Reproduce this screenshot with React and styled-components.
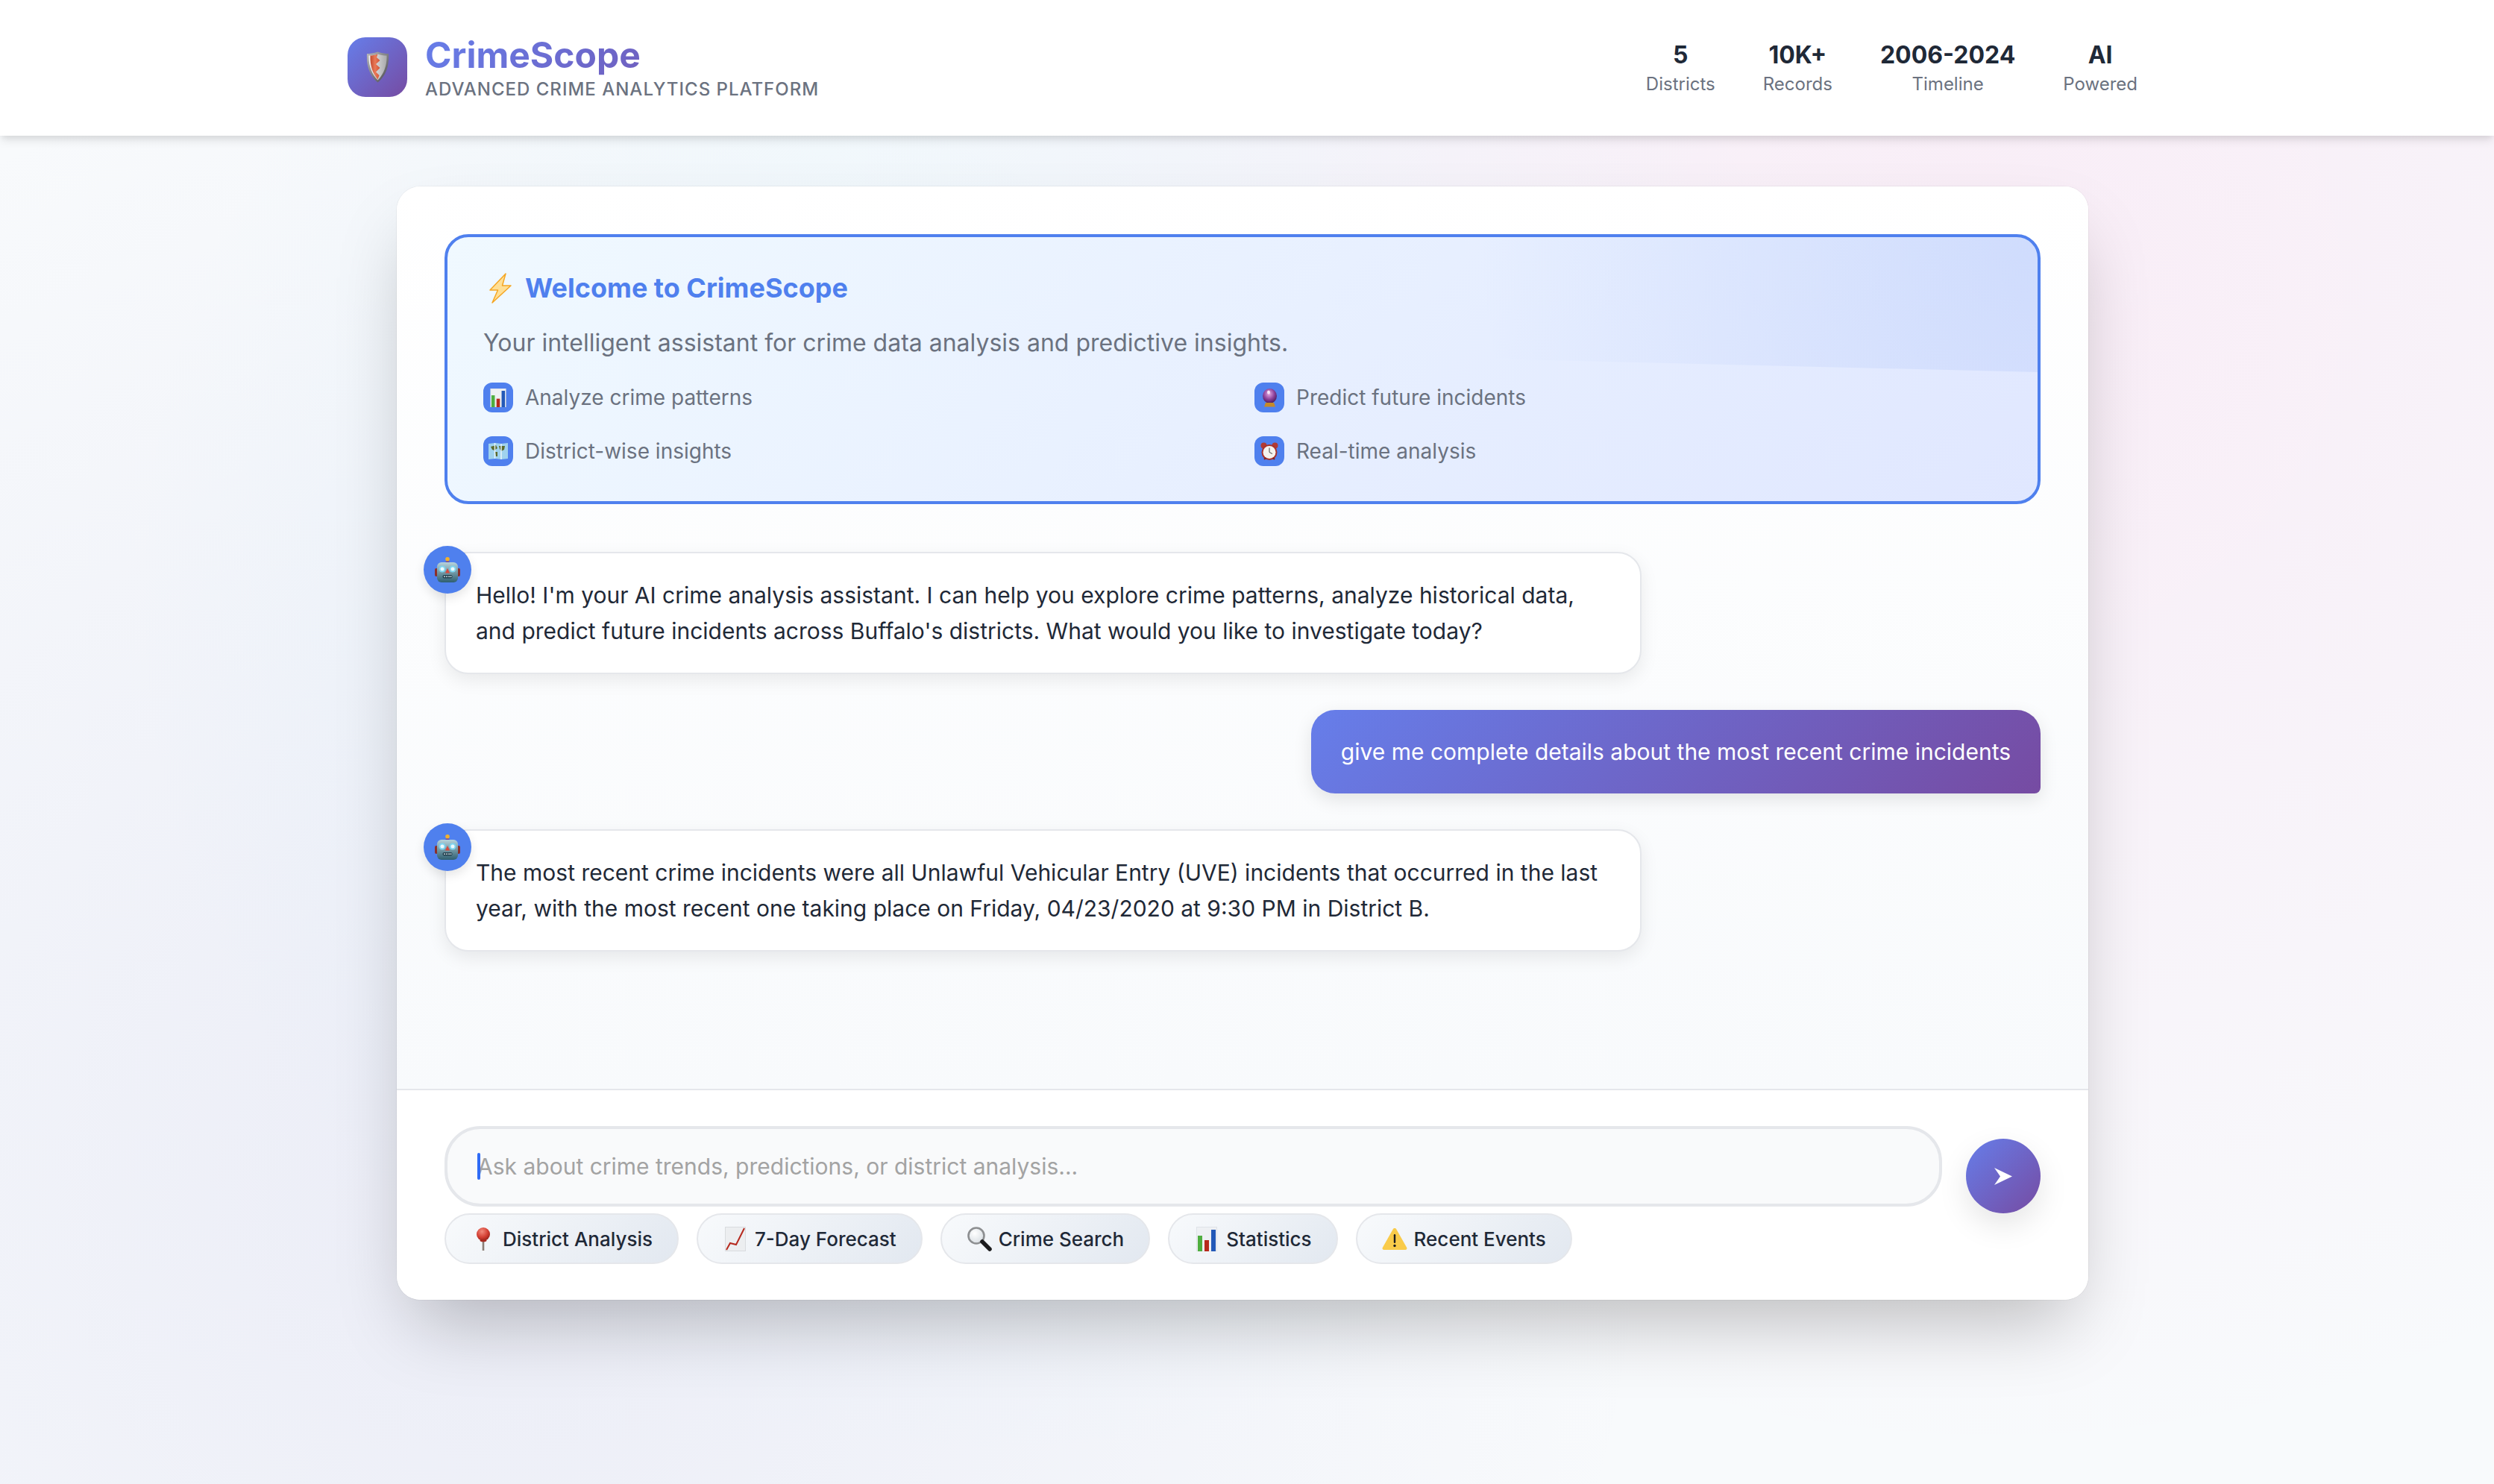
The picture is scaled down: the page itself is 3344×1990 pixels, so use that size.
import React from "react";
import styled, { createGlobalStyle } from "styled-components";

const Global = createGlobalStyle`
  * { box-sizing: border-box; }
  html, body { margin: 0; padding: 0; }
  body {
    font-family: "Inter", "Liberation Sans", sans-serif;
    color: #1f2937;
    background: #f8fafc;
  }
`;

const Page = styled.div`
  min-height: 1990px;
  display: flex;
  flex-direction: column;
  background:
    radial-gradient(circle at 20% 80%, rgba(120, 119, 198, 0.1) 0%, transparent 50%),
    radial-gradient(circle at 80% 20%, rgba(255, 119, 198, 0.1) 0%, transparent 50%),
    radial-gradient(circle at 40% 40%, rgba(120, 219, 255, 0.1) 0%, transparent 50%),
    #f8fafc;
`;

const Header = styled.header`
  height: 182px;
  padding: 0 478px 0 466px;
  display: flex;
  align-items: center;
  justify-content: space-between;
  background: #fff;
  box-shadow: 0 8px 12px -2px rgba(0, 0, 0, 0.1), 0 4px 8px -2px rgba(0, 0, 0, 0.06);
`;

const Brand = styled.div`
  display: flex;
  align-items: center;
  gap: 24px;
  margin-top: -2px;
`;

const LogoTile = styled.div`
  width: 80px;
  height: 80px;
  border-radius: 24px;
  display: flex;
  align-items: center;
  justify-content: center;
  background: linear-gradient(135deg, #667eea 0%, #764ba2 100%);
`;

const BrandText = styled.div`
  display: flex;
  flex-direction: column;
`;

const BrandName = styled.h1`
  margin: 0 0 4px;
  font-size: 48px;
  line-height: 56px;
  font-weight: 700;
  background: linear-gradient(135deg, #667eea 0%, #764ba2 100%);
  -webkit-background-clip: text;
  background-clip: text;
  color: transparent;
`;

const BrandTag = styled.p`
  margin: 0;
  font-size: 24px;
  line-height: 28px;
  font-weight: 500;
  letter-spacing: 1px;
  color: #6b7280;
`;

const Stats = styled.div`
  display: flex;
  gap: 64px;
  margin-top: -2px;
`;

const Stat = styled.div`
  display: flex;
  flex-direction: column;
  align-items: center;
`;

const StatValue = styled.div`
  margin-bottom: 2px;
  font-size: 32px;
  line-height: 44px;
  font-weight: 700;
  color: #1f2937;
`;

const StatLabel = styled.div`
  font-size: 24px;
  line-height: 30px;
  color: #6b7280;
`;

const Main = styled.main`
  padding: 68px 544px 0 532px;
`;

const Card = styled.section`
  background: #fff;
  border-radius: 32px;
  box-shadow: 0 0 0 1px rgba(0, 0, 0, 0.04), 0 50px 100px -24px rgba(0, 0, 0, 0.25);
`;

const Messages = styled.div`
  height: 1210px;
  padding: 64px;
  display: flex;
  flex-direction: column;
  gap: 48px;
  border-radius: 32px 32px 0 0;
  background: linear-gradient(180deg, #ffffff 0%, #f8fafc 100%);
`;

const Welcome = styled.div`
  position: relative;
  overflow: hidden;
  height: 362px;
  margin-bottom: 16px;
  padding: 44px 48px;
  border: 4px solid #4f80ee;
  border-radius: 32px;
  background: linear-gradient(135deg, #f0f9ff 0%, #e0e7ff 100%);
  &::before {
    content: "";
    position: absolute;
    top: calc(-50% + 4px);
    right: -50%;
    width: 100%;
    height: 100%;
    transform: rotate(1.4deg);
    background: radial-gradient(circle, rgba(79, 128, 238, 0.13) 0%, transparent 70%);
  }
`;

const WelcomeTitle = styled.h2`
  position: relative;
  margin: 0 0 26px;
  display: flex;
  align-items: center;
  gap: 18px;
  font-size: 36px;
  line-height: 48px;
  font-weight: 700;
  color: #4f80ee;
  & > svg { margin-left: 8px; }
`;

const WelcomeLead = styled.p`
  position: relative;
  margin: 0 0 29px;
  font-size: 32px;
  line-height: 48px;
  color: #6b7280;
`;

const Features = styled.div`
  position: relative;
  display: grid;
  grid-template-columns: 1fr 1fr;
  gap: 32px;
`;

const Feature = styled.div`
  display: flex;
  align-items: center;
  gap: 16px;
  font-size: 28px;
  line-height: 40px;
  color: #6b7280;
`;

const FeatureIcon = styled.div`
  width: 40px;
  height: 40px;
  border-radius: 12px;
  display: flex;
  align-items: center;
  justify-content: center;
  background: #4f80ee;
`;

const BotBubble = styled.div`
  position: relative;
  width: 75%;
  padding: 32px 40px;
  border: 2px solid #e5e7eb;
  border-radius: 32px;
  background: #fff;
  font-size: 30px;
  line-height: 48px;
  color: #1f2937;
  box-shadow: 0 8px 24px rgba(0, 0, 0, 0.08);
`;

const Avatar = styled.div`
  position: absolute;
  top: -10px;
  left: -30px;
  width: 64px;
  height: 64px;
  border-radius: 50%;
  display: flex;
  align-items: center;
  justify-content: center;
  background: #4f80ee;
  box-shadow: 0 6px 14px rgba(0, 0, 0, 0.1);
`;

const UserBubble = styled.div`
  align-self: flex-end;
  padding: 32px 40px;
  border-radius: 32px 32px 8px 32px;
  background: linear-gradient(135deg, #667eea 0%, #764ba2 100%);
  font-size: 30px;
  line-height: 48px;
  font-weight: 400;
  color: #fff;
  box-shadow: 0 8px 24px rgba(0, 0, 0, 0.1);
`;

const Composer = styled.div`
  padding: 48px 64px;
  border-top: 2px solid #e5e7eb;
  border-radius: 0 0 32px 32px;
  background: #fff;
`;

const ComposerRow = styled.div`
  height: 117px;
  display: flex;
  align-items: flex-start;
  gap: 32px;
`;

const InputField = styled.div`
  position: relative;
  flex: 1;
  height: 108px;
  display: flex;
`;

const Input = styled.input`
  width: 100%;
  height: 100%;
  padding: 0 40px;
  border: 4px solid #e5e7eb;
  border-radius: 48px;
  outline: none;
  background: #f9fafb;
  font-family: inherit;
  font-size: 30px;
  color: #1f2937;
  &::placeholder { color: #a3a3a3; opacity: 1; }
`;

const Caret = styled.span`
  position: absolute;
  left: 44px;
  top: 36px;
  width: 4px;
  height: 36px;
  border-radius: 2px;
  background: #2f6bf5;
`;

const SendButton = styled.button`
  flex: none;
  width: 100px;
  height: 100px;
  margin-top: 17px;
  padding: 0;
  border: none;
  border-radius: 50%;
  display: flex;
  align-items: center;
  justify-content: center;
  background: linear-gradient(135deg, #667eea 0%, #764ba2 100%);
  box-shadow: 0 16px 40px rgba(0, 0, 0, 0.1);
`;

const Chips = styled.div`
  display: flex;
  gap: 24px;
`;

const Chip = styled.button`
  height: 68px;
  padding: 0 33px;
  display: flex;
  align-items: center;
  gap: 8px;
  border: 2px solid #e5e7eb;
  border-radius: 34px;
  background: linear-gradient(135deg, #f8fafc 0%, #e2e8f0 100%);
  font-family: inherit;
  font-size: 26px;
  font-weight: 500;
  color: #1f2937;
`;

const ChipIcon = styled.span`
  flex: none;
  width: 36px;
  margin-left: -1px;
  display: flex;
  justify-content: center;
`;

const Glyph = styled.svg`
  flex: none;
  display: block;
  width: ${(p) => p.$w}px;
  height: ${(p) => p.$h}px;
`;

const Shield = ({ w = 31, h = 42 }) => (
  <Glyph $w={w} $h={h} viewBox="0 0 31 42">
    <defs>
      <linearGradient id="shRim" x1="0" y1="0" x2="1" y2="1">
        <stop offset="0" stopColor="#b9b9bb" />
        <stop offset="1" stopColor="#4a4a4e" />
      </linearGradient>
      <linearGradient id="shSilver" x1="0" y1="0" x2="1" y2="0">
        <stop offset="0" stopColor="#f4f4f4" />
        <stop offset="1" stopColor="#a9a9ab" />
      </linearGradient>
      <linearGradient id="shRed" x1="0" y1="0" x2="1" y2="0">
        <stop offset="0" stopColor="#c24a30" />
        <stop offset="0.5" stopColor="#ea7a58" />
        <stop offset="1" stopColor="#cf5236" />
      </linearGradient>
    </defs>
    <path d="M15.5 0.5 C21 2.5 26 3 30 3 C31 20 26 33 15.5 41.5 C5 33 0 20 1 3 C5 3 10 2.5 15.5 0.5Z" fill="url(#shRim)" />
    <path d="M15.5 3.5 C20 5 24.500 5.500 27.500 5.500 C28 19 23.500 30.500 15.500 38.500 C7.500 30.500 3 19 3.500 5.500 C6.500 5.500 11 5 15.500 3.500Z" fill="url(#shSilver)" />
    <path d="M15.500 3.500 C11 5 8 5.500 5.500 5.500 C5 19 8.500 29 15.500 37.500 L17.500 32 L13 27.500 L18.500 22 L13 17 L18.500 12 L14 8Z" fill="url(#shRed)" />
  </Glyph>
);

const Bolt = () => (
  <Glyph $w={30} $h={41} viewBox="0 0 30 41">
    <path d="M22 1 L1 23 L11.500 23 L4 40 L29 17 L17.500 17 Z" fill="#ffdf94" stroke="#f5a623" strokeWidth="1.500" strokeLinejoin="round" />
  </Glyph>
);

const Bars = ({ w = 22, h = 25 }) => (
  <Glyph $w={w} $h={h} viewBox="0 0 28 33">
    <rect width="28" height="33" fill="#dfe3e8" />
    <rect x="1" y="1" width="26" height="31" fill="#eef0f3" />
    <rect x="2" y="12" width="6" height="21" fill="#4fae3f" />
    <rect x="11" y="18" width="6" height="15" fill="#b72a1c" />
    <rect x="20" y="4" width="6" height="29" fill="#2359b8" />
  </Glyph>
);

const MapIcon = () => (
  <Glyph $w={26} $h={22} viewBox="0 0 26 22">
    <path d="M0 1 L9 0 L17 1 L26 0 L26 21 L17 22 L9 21 L0 22Z" fill="#9fd2ee" />
    <path d="M3 5 L10 3 L12 7 L8 10 L5 9Z M14 4 L22 4 L21 9 L17 11 L15 8Z M9 12 L12 12 L12 18 L10 18Z" fill="#5b6a2c" />
    <path d="M8.500 0 V21 M17 1 V22" stroke="#e7f4fb" strokeWidth="1.500" />
  </Glyph>
);

const CrystalBall = () => (
  <Glyph $w={23} $h={25} viewBox="0 0 23 25">
    <defs>
      <radialGradient id="cb" cx="0.45" cy="0.35" r="0.7">
        <stop offset="0" stopColor="#e6a8e4" />
        <stop offset="0.55" stopColor="#8b3f98" />
        <stop offset="1" stopColor="#3d1650" />
      </radialGradient>
    </defs>
    <ellipse cx="11.500" cy="10" rx="9.500" ry="10" fill="url(#cb)" />
    <ellipse cx="10" cy="5" rx="2" ry="2.500" fill="#f6e6f8" />
    <path d="M6 19 H17 L19 24.500 H4Z" fill="#c58a28" />
  </Glyph>
);

const Clock = () => (
  <Glyph $w={26} $h={25} viewBox="0 0 26 25">
    <circle cx="5.500" cy="4.500" r="4" fill="#b23a33" />
    <circle cx="20.500" cy="4.500" r="4" fill="#b23a33" />
    <circle cx="13" cy="13.500" r="10.500" fill="#a8322c" />
    <circle cx="13" cy="13.500" r="8.500" fill="#f5f3ee" />
    <path d="M13 13.500 L13 7.500 M13 13.500 L17 15.500" stroke="#444" strokeWidth="1" />
    <path d="M6 23 L8 21 M20 23 L18 21" stroke="#7d241f" strokeWidth="2" />
  </Glyph>
);

const Robot = () => (
  <Glyph $w={34} $h={34} viewBox="0 0 34 34">
    <defs>
      <linearGradient id="rb" x1="0" y1="0" x2="0" y2="1">
        <stop offset="0" stopColor="#b6d3dc" />
        <stop offset="1" stopColor="#2f5f70" />
      </linearGradient>
    </defs>
    <rect x="15.500" y="4" width="3" height="5" fill="#6b4a9a" />
    <circle cx="17" cy="2.800" r="2.800" fill="#f2b02e" />
    <path d="M12.500 8 Q17 3.500 21.500 8Z" fill="#6b3fa0" />
    <rect x="0" y="15" width="4" height="11" rx="2" fill="#8c2f2a" />
    <rect x="30" y="15" width="4" height="11" rx="2" fill="#8c2f2a" />
    <rect x="3" y="7" width="28" height="27" rx="6" fill="url(#rb)" />
    <circle cx="10" cy="16" r="4.500" fill="#7fd4ef" />
    <circle cx="24" cy="16" r="4.500" fill="#7fd4ef" />
    <circle cx="10" cy="16" r="2.500" fill="#eef9fd" />
    <circle cx="24" cy="16" r="2.500" fill="#eef9fd" />
    <path d="M17 15 L20 21.500 H14Z" fill="#d9473c" />
    <rect x="10.500" y="24" width="13" height="4.500" rx="2" fill="#24414e" />
    <path d="M13 26.200 h.1 M16 26.200 h.1 M19 26.200 h.1 M21.500 26.200 h.1" stroke="#cfdfe5" strokeWidth="1.800" strokeLinecap="round" />
  </Glyph>
);

const Pin = () => (
  <Glyph $w={20} $h={31} viewBox="0 0 20 31">
    <defs>
      <radialGradient id="pn" cx="0.4" cy="0.3" r="0.75">
        <stop offset="0" stopColor="#f28a7c" />
        <stop offset="0.6" stopColor="#d23d31" />
        <stop offset="1" stopColor="#8e1f18" />
      </radialGradient>
    </defs>
    <rect x="8.700" y="17" width="2.600" height="14" fill="#8b7f77" />
    <circle cx="10" cy="9" r="9" fill="url(#pn)" />
    <ellipse cx="10" cy="17.500" rx="4.500" ry="1.800" fill="#a82a20" />
  </Glyph>
);

const TrendUp = () => (
  <Glyph $w={28} $h={33} viewBox="0 0 28 33">
    <rect width="28" height="33" fill="#d9dcdf" />
    <rect x="1" y="1" width="26" height="31" fill="#eceef0" />
    <path d="M2 31 L7 22 L15 24 L26 2" fill="none" stroke="#b62a1f" strokeWidth="2" />
  </Glyph>
);

const Magnifier = () => (
  <Glyph $w={34} $h={34} viewBox="0 0 34 34">
    <defs>
      <radialGradient id="mg" cx="0.4" cy="0.35" r="0.7">
        <stop offset="0" stopColor="#ffffff" />
        <stop offset="1" stopColor="#d7dde2" />
      </radialGradient>
    </defs>
    <circle cx="13" cy="13" r="10.500" fill="url(#mg)" stroke="#8d8f91" strokeWidth="2.600" />
    <path d="M21 21 L31 31" stroke="#1c1c1e" strokeWidth="5.500" strokeLinecap="round" />
  </Glyph>
);

const Warning = () => (
  <Glyph $w={34} $h={30} viewBox="0 0 34 30">
    <path d="M17 1 C18 1 18.800 1.500 19.200 2.300 L33.200 27 C34 28.500 33 30 31.300 30 H2.700 C1 30 0 28.500 0.800 27 L14.800 2.300 C15.200 1.500 16 1 17 1Z" fill="#f9cb4a" />
    <rect x="15.800" y="9" width="2.400" height="12" rx="1.200" fill="#1c1c1e" />
    <circle cx="17" cy="24.500" r="1.700" fill="#1c1c1e" />
  </Glyph>
);

const SendGlyph = () => (
  <Glyph $w={24} $h={23} viewBox="0 0 24 23">
    <path d="M0 0 L24 11.500 L0 23 L8 11.500Z" fill="#fff" />
  </Glyph>
);

const stats = [
  ["5", "Districts"],
  ["10K+", "Records"],
  ["2006-2024", "Timeline"],
  ["AI", "Powered"],
];

const features = [
  [<Bars />, "Analyze crime patterns"],
  [<CrystalBall />, "Predict future incidents"],
  [<MapIcon />, "District-wise insights"],
  [<Clock />, "Real-time analysis"],
];

const chips = [
  [<Pin />, "District Analysis"],
  [<TrendUp />, "7-Day Forecast"],
  [<Magnifier />, "Crime Search"],
  [<Bars w={28} h={33} />, "Statistics"],
  [<Warning />, "Recent Events"],
];

export default function App() {
  return (
    <Page>
      <Global />
      <Header>
        <Brand>
          <LogoTile><Shield /></LogoTile>
          <BrandText>
            <BrandName>CrimeScope</BrandName>
            <BrandTag>ADVANCED CRIME ANALYTICS PLATFORM</BrandTag>
          </BrandText>
        </Brand>
        <Stats>
          {stats.map(([v, l]) => (
            <Stat key={l}>
              <StatValue>{v}</StatValue>
              <StatLabel>{l}</StatLabel>
            </Stat>
          ))}
        </Stats>
      </Header>
      <Main>
        <Card>
          <Messages>
            <Welcome>
              <WelcomeTitle><Bolt />Welcome to CrimeScope</WelcomeTitle>
              <WelcomeLead>Your intelligent assistant for crime data analysis and predictive insights.</WelcomeLead>
              <Features>
                {features.map(([icon, text]) => (
                  <Feature key={text}>
                    <FeatureIcon>{icon}</FeatureIcon>
                    {text}
                  </Feature>
                ))}
              </Features>
            </Welcome>
            <BotBubble>
              <Avatar><Robot /></Avatar>
              Hello! I'm your AI crime analysis assistant. I can help you explore crime patterns, analyze historical data, and predict future incidents across Buffalo's districts. What would you like to investigate today?
            </BotBubble>
            <UserBubble>give me complete details about the most recent crime incidents</UserBubble>
            <BotBubble>
              <Avatar><Robot /></Avatar>
              The most recent crime incidents were all Unlawful Vehicular Entry (UVE) incidents that occurred in the last year, with the most recent one taking place on Friday, 04/23/2020 at 9:30 PM in District B.
            </BotBubble>
          </Messages>
          <Composer>
            <ComposerRow>
              <InputField>
                <Input placeholder="Ask about crime trends, predictions, or district analysis..." readOnly />
                <Caret />
              </InputField>
              <SendButton aria-label="Send"><SendGlyph /></SendButton>
            </ComposerRow>
            <Chips>
              {chips.map(([icon, text]) => (
                <Chip key={text}><ChipIcon>{icon}</ChipIcon>{text}</Chip>
              ))}
            </Chips>
          </Composer>
        </Card>
      </Main>
    </Page>
  );
}
